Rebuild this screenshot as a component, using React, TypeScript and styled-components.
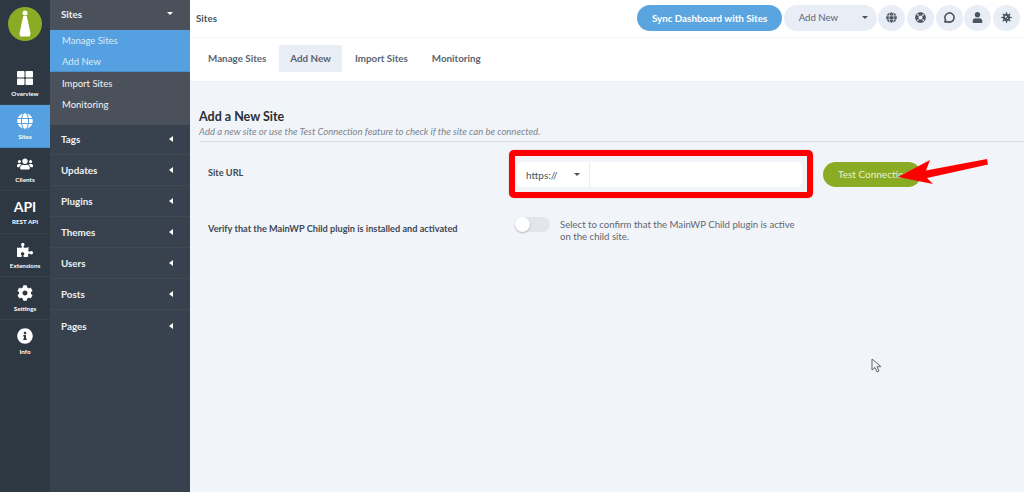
import React from 'react'
import styled, { createGlobalStyle } from 'styled-components'
import { FaThLarge, FaGlobe, FaUsers, FaPuzzlePiece, FaCog, FaInfoCircle, FaLifeRing, FaUser, FaVirus } from 'react-icons/fa'
import { MessageCircle } from 'lucide-react'

const Global = createGlobalStyle`
  html, body { margin: 0; padding: 0; height: 100%; }
  body { font-family: Lato, "Noto Sans", sans-serif; background: #f1f4f9; overflow: hidden; }
  * { box-sizing: border-box; }
`

const Page = styled.div`
  position: relative;
  display: flex;
  width: 1024px;
  height: 492px;
  overflow: hidden;
`

const Rail = styled.nav`
  width: 50px;
  flex: none;
  background: #2d3843;
  display: flex;
  flex-direction: column;
`

const LogoWrap = styled.div`
  height: 62px;
  display: flex;
  justify-content: center;
  padding-top: 7px;
`

const RailItem = styled.div<{ $active?: boolean; $last?: boolean }>`
  height: 43px;
  display: flex;
  flex-direction: column;
  align-items: center;
  justify-content: center;
  gap: 4px;
  color: #fff;
  font-size: 6.3px;
  font-weight: 700;
  border-bottom: ${p => (p.$last ? 'none' : `1px solid ${p.$active ? '#4a8fc8' : '#36424e'}`)};
  background: ${p => (p.$active ? '#54a0e0' : 'transparent')};
  svg { font-size: 16px; display: block; }
`

const ApiMark = styled.div`
  font-size: 14px;
  line-height: 15px;
  font-weight: 700;
`

const Side = styled.aside`
  width: 140px;
  flex: none;
  background: #38424e;
  color: #fff;
`

const SideHead = styled.div<{ $open?: boolean; $first?: boolean; $last?: boolean }>`
  height: ${p => (p.$open || p.$first ? 30 : 31)}px;
  padding: 0 17px ${p => (p.$open ? 3 : p.$first ? 2 : 0)}px 11px;
  display: flex;
  align-items: center;
  justify-content: space-between;
  font-size: 9.8px;
  font-weight: 700;
  color: #eef1f4;
  background: ${p => (p.$open ? '#4a515a' : 'transparent')};
  border-bottom: ${p => (p.$open || p.$last ? 'none' : '1px solid #414b56')};
`

const SubPanel = styled.div`
  background: #4a515a;
  height: 95px;
`

const ActiveGroup = styled.div`
  background: #54a0e0;
  height: 42px;
  margin-bottom: 1px;
  border-bottom: 1px solid #4a8fc8;
`

const SubLink = styled.div<{ $on?: boolean }>`
  height: 21px;
  padding-left: 12px;
  display: flex;
  align-items: center;
  font-size: 9.5px;
  color: ${p => (p.$on ? '#dcebf8' : '#f2f4f6')};
`

const TriLeft = styled.span`
  width: 0;
  height: 0;
  border-top: 3px solid transparent;
  border-bottom: 3px solid transparent;
  border-right: 4px solid #fff;
`

const TriDown = styled.span<{ $c?: string; $w?: number }>`
  width: 0;
  height: 0;
  border-left: ${p => p.$w ?? 3}px solid transparent;
  border-right: ${p => p.$w ?? 3}px solid transparent;
  border-top: ${p => p.$w ?? 3}px solid ${p => p.$c ?? '#fff'};
`

const Main = styled.main`
  flex: 1;
  min-width: 0;
  display: flex;
  flex-direction: column;
`

const Topbar = styled.header`
  height: 38px;
  flex: none;
  background: #fff;
  border-bottom: 1px solid #f1f4f9;
  display: flex;
  align-items: center;
  justify-content: space-between;
  padding: 0 4px 2px 6px;
  font-size: 9.8px;
  font-weight: 700;
  color: #4a5560;
`

const TopActions = styled.div`
  display: flex;
  align-items: center;
  gap: 1.67px;
`

const SyncBtn = styled.div`
  width: 145px;
  height: 26px;
  border-radius: 13px;
  background: #5aa5e0;
  color: #fff;
  font-size: 9.8px;
  font-weight: 700;
  display: flex;
  align-items: center;
  justify-content: center;
`

const AddBtn = styled.div`
  width: 93px;
  height: 26px;
  border-radius: 13px;
  background: #e9edf6;
  color: #5a6570;
  font-size: 9.6px;
  font-weight: 400;
  display: flex;
  align-items: center;
  justify-content: space-between;
  padding: 0 9px 0 15px;
`

const RoundBtn = styled.div`
  width: 27px;
  height: 26px;
  border-radius: 50%;
  background: #e9edf6;
  color: #4a5560;
  display: flex;
  align-items: center;
  justify-content: center;
  svg { font-size: 11px; display: block; }
`

const Tabs = styled.div`
  height: 44px;
  flex: none;
  background: #fff;
  border-bottom: 1px solid #eceff5;
  display: flex;
  align-items: center;
  gap: 2px;
  padding: 0 0 4px 7px;
`

const Tab = styled.div<{ $on?: boolean }>`
  height: 27px;
  padding: 0 11px;
  margin-top: 1px;
  display: flex;
  align-items: center;
  border-radius: 2px;
  font-size: 9.8px;
  font-weight: 700;
  color: #5a6570;
  background: ${p => (p.$on ? '#e9edf6' : 'transparent')};
`

const Content = styled.section`
  flex: 1;
  padding: 26px 0 0 9px;
`

const Title = styled.h2`
  margin: 0;
  font-size: 12.5px;
  line-height: 17px;
  font-weight: 700;
  color: #2a2f36;
`

const Sub = styled.p`
  margin: 0;
  padding: 1px 0 3px;
  font-size: 9.5px;
  line-height: 12px;
  font-style: italic;
  color: #7c858e;
  border-bottom: 1px solid #d9dde5;
`

const FormRow = styled.div<{ $gap: number }>`
  display: grid;
  grid-template-columns: 301px 1fr;
  margin-top: ${p => p.$gap}px;
  padding-left: 9px;
  font-size: 9.2px;
  font-weight: 700;
  color: #3f4852;
`

const FormLabel = styled.div`
  align-self: center;
  margin-bottom: 4px;
`

const RedFrame = styled.div`
  width: 304px;
  height: 48px;
  border: 6px solid #f00;
  border-radius: 5px;
  padding: 6px 5px 5px 2px;
  box-shadow: 0 0 1px rgba(60, 0, 0, 0.6);
`

const UrlField = styled.div`
  height: 25px;
  display: flex;
  background: #fff;
  border-radius: 5px;
  font-size: 10px;
  font-weight: 400;
  color: #4a5560;
`

const Scheme = styled.div`
  width: 73px;
  display: flex;
  align-items: center;
  justify-content: space-between;
  padding: 0 9px 0 9px;
  border-right: 1px solid #e9edf6;
`

const TestBtn = styled.div`
  width: 98px;
  height: 25px;
  margin-top: 1px;
  padding: 0 0 1px 15px;
  border-radius: 13px;
  background: #8aac25;
  color: #e9f0d0;
  font-size: 10px;
  font-weight: 400;
  display: flex;
  align-items: center;
  white-space: nowrap;
`

const UrlCell = styled.div`
  display: flex;
  align-items: center;
  gap: 10px;
`

const ToggleCell = styled.div`
  display: flex;
  align-items: flex-start;
  gap: 10px;
  padding-left: 6px;
  font-weight: 400;
  font-size: 9.6px;
  line-height: 12.5px;
  color: #5e6770;
`

const ToggleText = styled.span`
  padding-top: 1.5px;
`

const Toggle = styled.div`
  position: relative;
  width: 35px;
  height: 15px;
  border-radius: 8px;
  background: #e2e5eb;
  flex: none;
  &::after {
    content: '';
    position: absolute;
    left: 0;
    top: 0;
    width: 15px;
    height: 15px;
    border-radius: 50%;
    background: #fff;
    box-shadow: 0 1px 2px rgba(0, 0, 0, 0.25);
  }
`

const Annotation = styled.svg`
  position: absolute;
  left: 890px;
  top: 150px;
  pointer-events: none;
`

const Pointer = styled.svg`
  position: absolute;
  left: 871px;
  top: 358px;
  pointer-events: none;
`

const navItems = ['Tags', 'Updates', 'Plugins', 'Themes', 'Users', 'Posts', 'Pages']

export default function App() {
  return (
    <Page>
      <Global />
      <Rail>
        <LogoWrap>
          <svg width="34" height="34" viewBox="0 0 34 34">
            <circle cx="17" cy="17" r="17" fill="#8aac25" />
            <circle cx="17" cy="6" r="2.500" fill="#fff" />
            <path d="M15.300 9h3.400l1 4 2.800 13.500-.8 3h-9.400l-.8-3L14.300 13z" fill="#fff" />
          </svg>
        </LogoWrap>
        <RailItem><FaThLarge />Overview</RailItem>
        <RailItem $active><FaGlobe />Sites</RailItem>
        <RailItem><FaUsers />Clients</RailItem>
        <RailItem><ApiMark>API</ApiMark>REST API</RailItem>
        <RailItem><FaPuzzlePiece />Extensions</RailItem>
        <RailItem><FaCog />Settings</RailItem>
        <RailItem $last><FaInfoCircle />Info</RailItem>
      </Rail>
      <Side>
        <SideHead $open>Sites<TriDown $w={3} /></SideHead>
        <SubPanel>
          <ActiveGroup>
            <SubLink $on>Manage Sites</SubLink>
            <SubLink $on>Add New</SubLink>
          </ActiveGroup>
          <SubLink>Import Sites</SubLink>
          <SubLink>Monitoring</SubLink>
        </SubPanel>
        {navItems.map((n, i) => (
          <SideHead key={n} $first={i === 0} $last={i === navItems.length - 1}>{n}<TriLeft /></SideHead>
        ))}
      </Side>
      <Main>
        <Topbar>
          Sites
          <TopActions>
            <SyncBtn>Sync Dashboard with Sites</SyncBtn>
            <AddBtn>Add New<TriDown $c="#4a5560" $w={3} /></AddBtn>
            <RoundBtn><FaGlobe /></RoundBtn>
            <RoundBtn><FaLifeRing /></RoundBtn>
            <RoundBtn><MessageCircle size={11} strokeWidth={3.500} /></RoundBtn>
            <RoundBtn><FaUser /></RoundBtn>
            <RoundBtn><FaVirus /></RoundBtn>
          </TopActions>
        </Topbar>
        <Tabs>
          <Tab>Manage Sites</Tab>
          <Tab $on>Add New</Tab>
          <Tab>Import Sites</Tab>
          <Tab>Monitoring</Tab>
        </Tabs>
        <Content>
          <Title>Add a New Site</Title>
          <Sub>Add a new site or use the Test Connection feature to check if the site can be connected.</Sub>
          <FormRow $gap={8}>
            <FormLabel>Site URL</FormLabel>
            <UrlCell>
              <RedFrame>
                <UrlField>
                  <Scheme>https://<TriDown $c="#4a5560" $w={3} /></Scheme>
                </UrlField>
              </RedFrame>
              <TestBtn>Test Connection</TestBtn>
            </UrlCell>
          </FormRow>
          <FormRow $gap={19}>
            <FormLabel>Verify that the MainWP Child plugin is installed and activated</FormLabel>
            <ToggleCell>
              <Toggle />
              <ToggleText>Select to confirm that the MainWP Child plugin is active<br />on the child site.</ToggleText>
            </ToggleCell>
          </FormRow>
        </Content>
      </Main>
      <Annotation width="100" height="40" viewBox="0 0 100 40">
        <path d="M8 27 L40 10 L36 20.500 L97 9 L98 14.500 L37 28 L43 34 Z" fill="#f00" />
      </Annotation>
      <Pointer width="12" height="16" viewBox="0 0 12 16">
        <path d="M1 1v11l3-2.500 2 4.500 2-1-2-4.300h4z" fill="#f1f4f9" stroke="#666" strokeWidth="1" />
      </Pointer>
    </Page>
  )
}
